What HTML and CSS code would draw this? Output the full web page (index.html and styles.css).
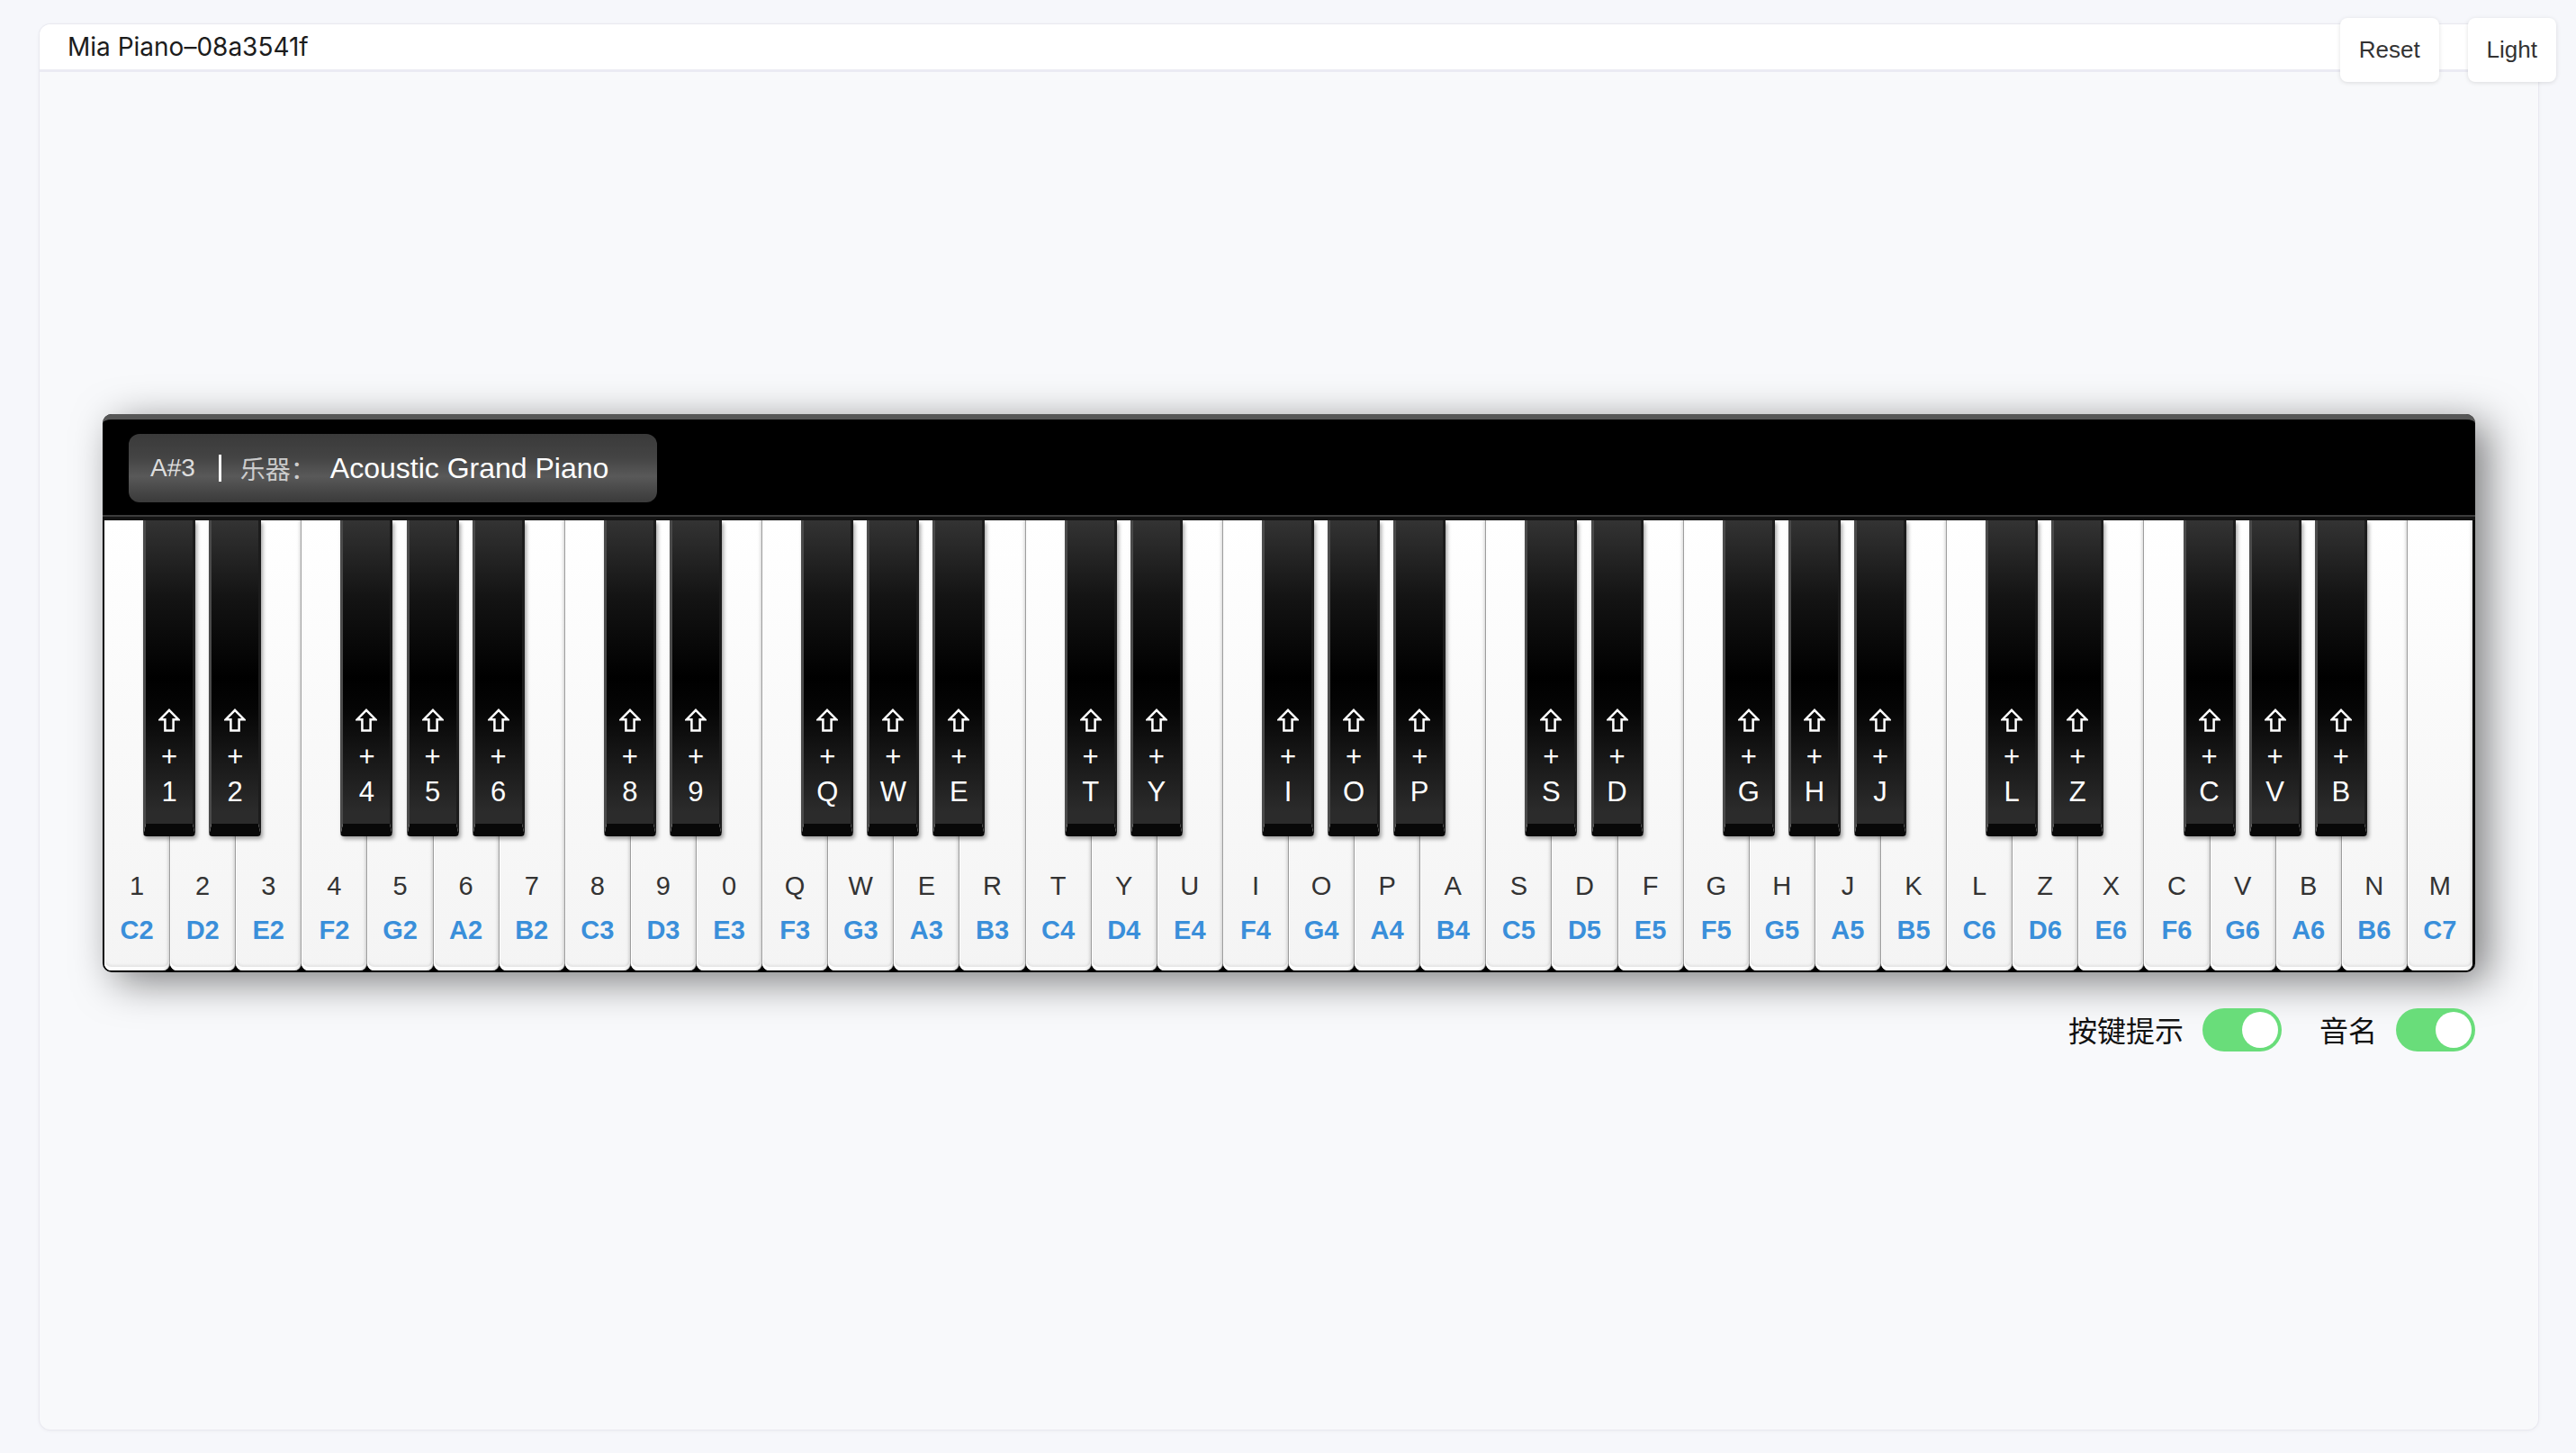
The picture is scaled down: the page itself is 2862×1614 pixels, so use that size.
FILE: index.html
```html
<!DOCTYPE html>
<html lang="zh">
<head>
<meta charset="utf-8">
<title>Mia Piano</title>
<link rel="stylesheet" href="styles.css">
</head>
<body>
<svg class="defs" width="0" height="0" aria-hidden="true">
  <symbol id="shift" viewBox="0 0 24 26">
    <path d="M12 1.8 L22.2 12.2 L16.6 12.2 L16.6 24.5 L7.4 24.5 L7.4 12.2 L1.8 12.2 Z" fill="none" stroke="#fff" stroke-width="2.5" stroke-linejoin="miter"/>
  </symbol>
</svg>
<div class="page">
  <div class="card">
    <div class="header">Mia Piano–08a3541f</div>
    <div class="stage">
      <div class="piano">
        <div class="piano-top">
          <div class="display"><span class="cur">A#3</span><span class="sep"></span><span class="lab">乐器：</span><span class="inst">Acoustic Grand Piano</span></div>
        </div>
        <div class="keys">
          <div class="wk"><div class="bk"><svg class="sh"><use href="#shift"/></svg><span class="bp">+</span><span class="bc">1</span></div><span class="wc">1</span><span class="wn">C2</span></div>
          <div class="wk"><div class="bk"><svg class="sh"><use href="#shift"/></svg><span class="bp">+</span><span class="bc">2</span></div><span class="wc">2</span><span class="wn">D2</span></div>
          <div class="wk"><span class="wc">3</span><span class="wn">E2</span></div>
          <div class="wk"><div class="bk"><svg class="sh"><use href="#shift"/></svg><span class="bp">+</span><span class="bc">4</span></div><span class="wc">4</span><span class="wn">F2</span></div>
          <div class="wk"><div class="bk"><svg class="sh"><use href="#shift"/></svg><span class="bp">+</span><span class="bc">5</span></div><span class="wc">5</span><span class="wn">G2</span></div>
          <div class="wk"><div class="bk"><svg class="sh"><use href="#shift"/></svg><span class="bp">+</span><span class="bc">6</span></div><span class="wc">6</span><span class="wn">A2</span></div>
          <div class="wk"><span class="wc">7</span><span class="wn">B2</span></div>
          <div class="wk"><div class="bk"><svg class="sh"><use href="#shift"/></svg><span class="bp">+</span><span class="bc">8</span></div><span class="wc">8</span><span class="wn">C3</span></div>
          <div class="wk"><div class="bk"><svg class="sh"><use href="#shift"/></svg><span class="bp">+</span><span class="bc">9</span></div><span class="wc">9</span><span class="wn">D3</span></div>
          <div class="wk"><span class="wc">0</span><span class="wn">E3</span></div>
          <div class="wk"><div class="bk"><svg class="sh"><use href="#shift"/></svg><span class="bp">+</span><span class="bc">Q</span></div><span class="wc">Q</span><span class="wn">F3</span></div>
          <div class="wk"><div class="bk"><svg class="sh"><use href="#shift"/></svg><span class="bp">+</span><span class="bc">W</span></div><span class="wc">W</span><span class="wn">G3</span></div>
          <div class="wk"><div class="bk"><svg class="sh"><use href="#shift"/></svg><span class="bp">+</span><span class="bc">E</span></div><span class="wc">E</span><span class="wn">A3</span></div>
          <div class="wk"><span class="wc">R</span><span class="wn">B3</span></div>
          <div class="wk"><div class="bk"><svg class="sh"><use href="#shift"/></svg><span class="bp">+</span><span class="bc">T</span></div><span class="wc">T</span><span class="wn">C4</span></div>
          <div class="wk"><div class="bk"><svg class="sh"><use href="#shift"/></svg><span class="bp">+</span><span class="bc">Y</span></div><span class="wc">Y</span><span class="wn">D4</span></div>
          <div class="wk"><span class="wc">U</span><span class="wn">E4</span></div>
          <div class="wk"><div class="bk"><svg class="sh"><use href="#shift"/></svg><span class="bp">+</span><span class="bc">I</span></div><span class="wc">I</span><span class="wn">F4</span></div>
          <div class="wk"><div class="bk"><svg class="sh"><use href="#shift"/></svg><span class="bp">+</span><span class="bc">O</span></div><span class="wc">O</span><span class="wn">G4</span></div>
          <div class="wk"><div class="bk"><svg class="sh"><use href="#shift"/></svg><span class="bp">+</span><span class="bc">P</span></div><span class="wc">P</span><span class="wn">A4</span></div>
          <div class="wk"><span class="wc">A</span><span class="wn">B4</span></div>
          <div class="wk"><div class="bk"><svg class="sh"><use href="#shift"/></svg><span class="bp">+</span><span class="bc">S</span></div><span class="wc">S</span><span class="wn">C5</span></div>
          <div class="wk"><div class="bk"><svg class="sh"><use href="#shift"/></svg><span class="bp">+</span><span class="bc">D</span></div><span class="wc">D</span><span class="wn">D5</span></div>
          <div class="wk"><span class="wc">F</span><span class="wn">E5</span></div>
          <div class="wk"><div class="bk"><svg class="sh"><use href="#shift"/></svg><span class="bp">+</span><span class="bc">G</span></div><span class="wc">G</span><span class="wn">F5</span></div>
          <div class="wk"><div class="bk"><svg class="sh"><use href="#shift"/></svg><span class="bp">+</span><span class="bc">H</span></div><span class="wc">H</span><span class="wn">G5</span></div>
          <div class="wk"><div class="bk"><svg class="sh"><use href="#shift"/></svg><span class="bp">+</span><span class="bc">J</span></div><span class="wc">J</span><span class="wn">A5</span></div>
          <div class="wk"><span class="wc">K</span><span class="wn">B5</span></div>
          <div class="wk"><div class="bk"><svg class="sh"><use href="#shift"/></svg><span class="bp">+</span><span class="bc">L</span></div><span class="wc">L</span><span class="wn">C6</span></div>
          <div class="wk"><div class="bk"><svg class="sh"><use href="#shift"/></svg><span class="bp">+</span><span class="bc">Z</span></div><span class="wc">Z</span><span class="wn">D6</span></div>
          <div class="wk"><span class="wc">X</span><span class="wn">E6</span></div>
          <div class="wk"><div class="bk"><svg class="sh"><use href="#shift"/></svg><span class="bp">+</span><span class="bc">C</span></div><span class="wc">C</span><span class="wn">F6</span></div>
          <div class="wk"><div class="bk"><svg class="sh"><use href="#shift"/></svg><span class="bp">+</span><span class="bc">V</span></div><span class="wc">V</span><span class="wn">G6</span></div>
          <div class="wk"><div class="bk"><svg class="sh"><use href="#shift"/></svg><span class="bp">+</span><span class="bc">B</span></div><span class="wc">B</span><span class="wn">A6</span></div>
          <div class="wk"><span class="wc">N</span><span class="wn">B6</span></div>
          <div class="wk"><span class="wc">M</span><span class="wn">C7</span></div>
        </div>
      </div>
      <div class="controls">
        <div class="opt"><span class="opt-label">按键提示</span><div class="switch"><span class="knob"></span></div></div>
        <div class="opt"><span class="opt-label">音名</span><div class="switch"><span class="knob"></span></div></div>
      </div>
    </div>
  </div>
  <div class="actions"><button class="btn">Reset</button><button class="btn">Light</button></div>
</div>
</body>
</html>
```

FILE: styles.css
```css
* { box-sizing: border-box; }
html, body { margin: 0; padding: 0; }
body {
  background: #f6f7fb;
  font-family: "Liberation Sans", Arial, sans-serif;
  overflow: hidden;
}
.defs { position: absolute; width: 0; height: 0; overflow: hidden; }
.page {
  position: relative;
  padding: 27px 42px 26px 44px;
}
.card {
  height: 1561px;
  background: #f8f9fb;
  border-radius: 12px;
  box-shadow: 0 0 0 1px #e9e9f0, 0 1px 4px rgba(60, 60, 90, 0.08);
}
.header {
  height: 53px;
  background: #fff;
  border-bottom: 3px solid #ebebf3;
  border-radius: 12px 12px 0 0;
  display: flex;
  align-items: center;
  padding-left: 31px;
  font-family: Inter, "Noto Sans", sans-serif;
  font-size: 28px;
  color: #1c1c1c;
}
.actions {
  position: absolute;
  top: 20px;
  right: 22px;
  display: flex;
  gap: 32px;
}
.btn {
  height: 71px;
  padding: 0 21px;
  border: none;
  border-radius: 8px;
  background: #fff;
  box-shadow: 0 1px 5px rgba(0, 0, 0, 0.12);
  font-family: "Liberation Sans", Arial, sans-serif;
  font-size: 26px;
  color: #333;
}
.stage {
  padding-top: 380px;
}
.piano {
  width: 2636px;
  margin: 0 auto;
  background: #000;
  border-radius: 10px;
  padding-bottom: 2px;
  box-shadow: 14px 10px 45px rgba(0, 0, 0, 0.5);
}
.piano-top {
  height: 118px;
  border-top: 6px solid #575757;
  border-bottom: 4px solid #141414;
  border-radius: 10px 10px 0 0;
  box-shadow: inset 0 -2px 0 #3c3c3c;
  padding: 16px 0 0 29px;
}
.display {
  width: 587px;
  height: 76px;
  border-radius: 12px;
  background: linear-gradient(to bottom, #3a3a3a 0%, #444 35%, #595959 62%, #4a4a4a 80%, #3a3a3a 100%);
  display: flex;
  align-items: center;
  padding-left: 24px;
}
.cur { font-size: 28px; color: #ddd; }
.sep { width: 3px; height: 30px; background: #fff; margin-left: 26px; }
.lab {
  margin-left: 21px;
  font-size: 28px;
  color: #ccc;
  font-family: "Liberation Sans", "Noto Sans CJK SC", sans-serif;
}
.inst { margin-left: 16px; font-size: 32px; color: #fff; }
.keys {
  display: flex;
  height: 500px;
  margin: 0 3px 0 2px;
}
.wk {
  position: relative;
  flex: 1 1 0;
  display: flex;
  flex-direction: column;
  justify-content: flex-end;
  align-items: center;
  padding-bottom: 28px;
  background: linear-gradient(to bottom, #ffffff 0%, #f9f9f9 50%, #f4f4f4 100%);
  border-right: 1px solid #9d9d9d;
  border-radius: 0 0 8px 8px;
  box-shadow: inset 1px 0 0 #fff, inset -3px 0 3px -1px rgba(0, 0, 0, 0.1), inset 0 -4px 0 #fdfdfd, inset 0 -6px 3px rgba(0, 0, 0, 0.07);
}
.wk:last-child { border-right: none; }
.wc {
  font-size: 29px;
  line-height: 34px;
  color: #333;
}
.wn {
  margin-top: 15px;
  font-size: 29px;
  line-height: 34px;
  font-weight: bold;
  color: #3a8fda;
}
.bk {
  position: absolute;
  top: 0;
  right: -29px;
  z-index: 2;
  width: 58px;
  height: 351px;
  display: flex;
  flex-direction: column;
  justify-content: flex-end;
  align-items: center;
  padding-bottom: 18px;
  border-left: 3px solid #4a4a4a;
  border-right: 3px solid #1c1c1c;
  border-bottom: 14px solid #080808;
  border-radius: 0 0 4px 4px;
  background: linear-gradient(to bottom, #333 0%, #141414 25%, #000 52%, #050505 62%, #2b2b2b 96%, #2b2b2b 100%);
  box-shadow: 2px 3px 4px rgba(0, 0, 0, 0.35);
  color: #fff;
}
.sh { width: 24px; height: 26px; display: block; margin-bottom: 11px; }
.bp { font-size: 31px; line-height: 34px; }
.bc { margin-top: 5px; font-size: 31px; line-height: 34px; }
.controls {
  width: 2636px;
  margin: 40px auto 0;
  display: flex;
  justify-content: flex-end;
  align-items: center;
}
.opt {
  display: flex;
  align-items: center;
  gap: 21px;
  margin-left: 42px;
}
.opt-label {
  font-family: "Noto Sans CJK SC", sans-serif;
  font-size: 32px;
  line-height: 40px;
  padding-bottom: 3px;
  color: #111;
}
.switch {
  width: 88px;
  height: 48px;
  border-radius: 24px;
  background: #69dd7a;
  display: flex;
  justify-content: flex-end;
  align-items: center;
  padding-right: 4px;
}
.knob {
  width: 40px;
  height: 40px;
  border-radius: 50%;
  background: #fff;
}
```
